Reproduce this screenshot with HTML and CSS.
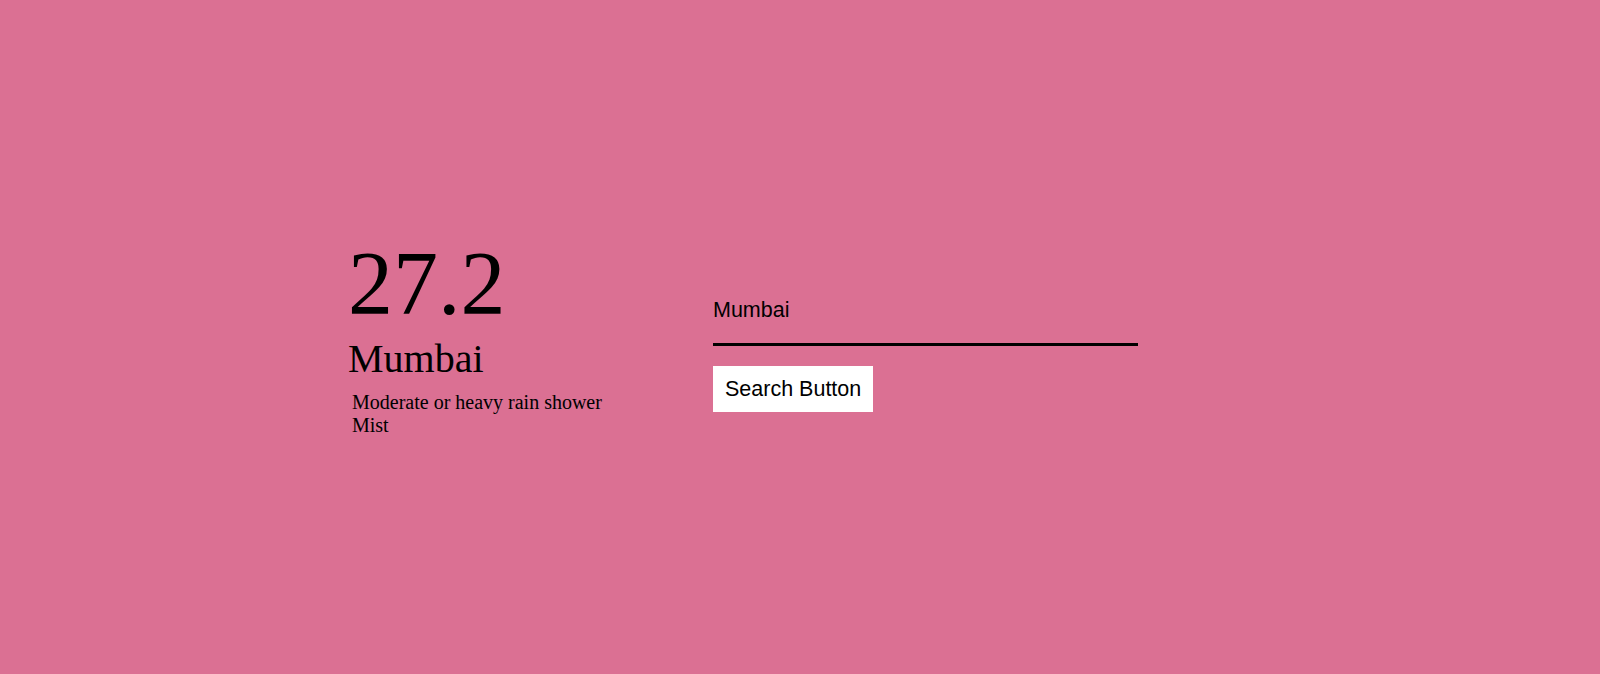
FILE: index.html
```html
<!DOCTYPE html>
<html lang="en">
<head>
<meta charset="utf-8">
<title>Weather</title>
<link rel="stylesheet" href="styles.css">
</head>
<body>
<main class="page">
  <section class="weather">
    <div class="temp">27.2</div>
    <div class="city">Mumbai</div>
    <div class="desc">
      <div>Moderate or heavy rain shower</div>
      <div>Mist</div>
    </div>
  </section>
  <section class="search">
    <input class="search-input" type="text" value="Mumbai" autofocus>
    <button class="search-button" type="button">Search Button</button>
  </section>
</main>
</body>
</html>
```

FILE: styles.css
```css
html, body {
  margin: 0;
  padding: 0;
}

body {
  background: palevioletred;
  height: 674px;
  overflow: hidden;
  color: #000;
}

.page {
  display: flex;
  align-items: flex-start;
  padding-top: 239px;
  padding-left: 348px;
}

.weather {
  width: 365px;
  display: flex;
  flex-direction: column;
  font-family: "Liberation Serif", "Times New Roman", serif;
}

.temp {
  font-size: 90px;
  line-height: 90px;
}

.city {
  margin-top: 10px;
  font-size: 40px;
  line-height: 40px;
}

.desc {
  margin-top: 12px;
  padding-left: 4px;
  font-size: 20px;
  line-height: 23px;
}

.search {
  display: flex;
  flex-direction: column;
  align-items: flex-start;
  padding-top: 51px;
}

.search-input {
  box-sizing: border-box;
  width: 425px;
  height: 56px;
  margin: 0;
  padding: 8px 0 21px 0;
  border: none;
  border-bottom: 3px solid #000;
  background: transparent;
  outline: none;
  font-family: "Liberation Sans", Arial, sans-serif;
  font-size: 21.5px;
  line-height: 24px;
  color: #000;
  caret-color: #000;
}

.search-button {
  margin-top: 20px;
  height: 46px;
  padding: 0 12px;
  border: none;
  background: #fff;
  color: #000;
  font-family: "Liberation Sans", Arial, sans-serif;
  font-size: 21.5px;
  line-height: 46px;
  cursor: pointer;
}
```
